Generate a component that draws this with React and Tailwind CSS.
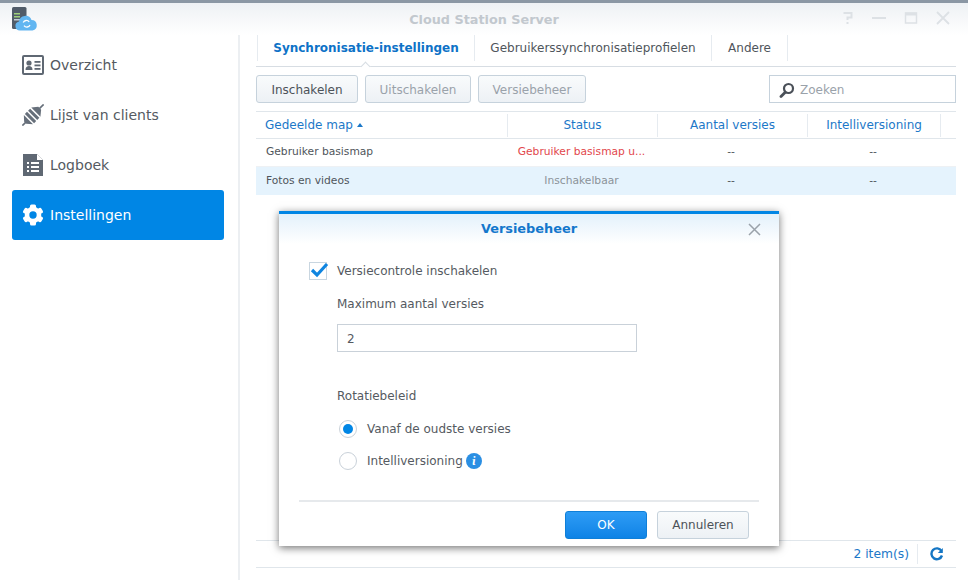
const font = { fontFamily: '"DejaVu Sans", sans-serif' };

function CloudLogo() {
  return (
    <svg width="26" height="26" viewBox="0 0 26 26">
      <rect x="0" y="0" width="14.500" height="22" rx="1.5" fill="#515c69" />
      <rect x="2" y="6" width="6" height="1.500" fill="#9fd07a" />
      <rect x="2" y="9" width="6" height="1.500" fill="#9fd07a" />
      <rect x="2" y="12" width="6" height="1.500" fill="#c3ccd6" />
      <path d="M8 23.500a4.500 4.500 0 0 1-1-8.900 6.500 6.500 0 0 1 12.500-1.600A5.300 5.300 0 0 1 20.500 23.500z" fill="#62b6f1" />
      <path d="M11.200 15.500a3.500 3.500 0 0 1 6-.6M18 18a3.500 3.500 0 0 1-6 .6" fill="none" stroke="#fff" strokeWidth="1.300" />
    </svg>
  );
}

function OverviewIcon() {
  return (
    <svg width="22" height="20" viewBox="0 0 22 20">
      <rect x="1" y="1" width="20" height="18" rx="1" fill="none" stroke="#5f6873" strokeWidth="2" />
      <circle cx="7" cy="8" r="2.6" fill="#5f6873" />
      <path d="M3.5 15c0-3 1.5-4 3.5-4s3.500 1 3.500 4z" fill="#5f6873" />
      <rect x="12.500" y="6" width="6" height="1.800" fill="#5f6873" />
      <rect x="12.500" y="9.500" width="6" height="1.800" fill="#5f6873" />
      <rect x="12.500" y="13" width="6" height="1.800" fill="#5f6873" />
    </svg>
  );
}

function PlugIcon() {
  return (
    <svg width="22" height="22" viewBox="0 0 22 22">
      <g transform="translate(11 11) rotate(-45)" fill="#666f7a">
        <rect x="-15" y="-0.800" width="5" height="1.600" />
        <path d="M-11 -1.500L-6.500 -6.500V6.500L-11 1.500z" />
        <rect x="-5" y="-6.500" width="3" height="13" />
        <rect x="-0.500" y="-6.500" width="3" height="13" />
        <path d="M4 -6.500V6.500L9.500 2V-2z" />
        <rect x="9" y="-0.800" width="6" height="1.600" />
      </g>
    </svg>
  );
}

function LogIcon() {
  return (
    <svg width="20" height="22" viewBox="0 0 20 22">
      <path d="M0 0h14l6 6v16H0z" fill="#5f6873" />
      <path d="M14 0v6h6z" fill="#fff" />
      <rect x="4" y="8" width="2" height="2" fill="#fff" />
      <rect x="8" y="8" width="8" height="2" fill="#fff" />
      <rect x="4" y="12" width="2" height="2" fill="#fff" />
      <rect x="8" y="12" width="8" height="2" fill="#fff" />
      <rect x="4" y="16" width="2" height="2" fill="#fff" />
      <rect x="8" y="16" width="8" height="2" fill="#fff" />
    </svg>
  );
}

function GearIcon() {
  return (
    <svg width="22" height="22" viewBox="0 0 22 22">
      <circle cx="11" cy="11" r="6" fill="none" stroke="#fff" strokeWidth="4.600" />
      {[0, 60, 120, 180, 240, 300].map((a) => (
        <rect key={a} x="8" y="0.500" width="6" height="5" rx="1.500" fill="#fff" transform={`rotate(${a} 11 11)`} />
      ))}
    </svg>
  );
}

function NavItem({ icon, label, active }) {
  return (
    <div className={`flex h-[50px] items-center rounded-[3px] ${active ? "bg-[#0086e5] text-white" : "text-[#555a61]"}`}>
      <div className="flex w-[38px] shrink-0 justify-center pl-[3px]">{icon}</div>
      <span className="text-[14px]">{label}</span>
    </div>
  );
}

function ToolButton({ label, disabled, className }) {
  return (
    <button
      type="button"
      className={`h-[28px] rounded-[3px] border border-[#c6d2dc] bg-gradient-to-b from-[#f9fbfc] to-[#edf1f5] pt-[1px] text-[12px] ${disabled ? "text-[#9aa2aa]" : "text-[#4c5258]"} ${className}`}
    >
      {label}
    </button>
  );
}

function HeadCell({ className, children }) {
  return <div className={`flex h-[23px] items-center justify-center border-r border-[#e6ebf0] text-[12px] text-[#1c78c8] ${className}`}>{children}</div>;
}

function Row({ name, status, statusClass, selected }) {
  return (
    <div className={`flex h-[28px] items-center text-[10.700px] text-[#4f555b] ${selected ? "bg-[#e5f3fd]" : "border-b border-[#eef1f4] bg-white"}`}>
      <div className="w-[251px] pl-[10px]">{name}</div>
      <div className={`w-[149px] text-center ${statusClass}`}>{status}</div>
      <div className="w-[150px] text-center">--</div>
      <div className="w-[134px] text-center">--</div>
    </div>
  );
}

function Radio({ checked, label, children }) {
  return (
    <div className="flex h-[32px] items-center">
      <span className="ml-[2px] flex h-[18px] w-[18px] items-center justify-center rounded-full border border-[#c9d1d9] bg-white">
        {checked && <span className="h-[10px] w-[10px] rounded-full bg-[#0086e5]" />}
      </span>
      <span className="ml-[10px] text-[12px] text-[#555a61]">{label}</span>
      {children}
    </div>
  );
}

export default function App() {
  return (
    <div style={font} className="relative flex h-[580px] w-[968px] flex-col overflow-hidden bg-white">
      <div className="h-[3px] bg-[#8b97a4]" />
      <div className="relative flex h-[32px] items-center justify-center bg-gradient-to-b from-[#eef1f4] to-white">
        <div className="absolute left-[12px] top-[4px]"><CloudLogo /></div>
        <span className="pt-[1px] text-[12.800px] font-bold text-[#c2c8ce]">Cloud Station Server</span>
        <div className="absolute right-[18px] top-[8px] flex items-center gap-[18px]">
          <svg className="mr-[-1px]" width="14" height="14" viewBox="0 0 14 14" fill="none" stroke="#dde1e5" strokeWidth="2">
            <path d="M2.500 2h8v4.500h-4V9" />
            <rect x="5.500" y="11" width="2" height="2" fill="#dde1e5" stroke="none" />
          </svg>
          <svg width="14" height="14" viewBox="0 0 14 14"><rect x="0" y="6" width="14" height="2" fill="#dde1e5" /></svg>
          <svg width="14" height="14" viewBox="0 0 14 14" fill="none" stroke="#dde1e5" strokeWidth="1.500">
            <rect x="1.500" y="2" width="11" height="10" />
            <rect x="1" y="1.500" width="12" height="3" fill="#dde1e5" stroke="none" />
          </svg>
          <svg width="14" height="14" viewBox="0 0 14 14" stroke="#dde1e5" strokeWidth="1.800"><path d="M1 1l12 12M13 1L1 13" /></svg>
        </div>
      </div>

      <div className="flex min-h-0 flex-1">
        <div className="w-[240px] shrink-0 border-r-2 border-[#eceff2] pl-[12px] pr-[14px] pt-[5px]">
          <NavItem icon={<OverviewIcon />} label="Overzicht" />
          <NavItem icon={<PlugIcon />} label="Lijst van clients" />
          <NavItem icon={<LogIcon />} label="Logboek" />
          <NavItem icon={<GearIcon />} label="Instellingen" active />
        </div>

        <div className="flex min-w-0 flex-1 flex-col pb-[12px] pl-[16px] pr-[12px]">
          <div className="relative flex h-[32px] shrink-0 items-stretch border-b border-[#d7dde3] pb-[5px] text-[12px] text-[#4f555b]">
            <div className="ml-[1px] flex w-[218px] items-center justify-center border-x border-[#e6ebf0] font-bold text-[#0d72c7]">
              Synchronisatie-instellingen
            </div>
            <div className="flex w-[237px] items-center justify-center border-r border-[#e6ebf0]">Gebruikerssynchronisatieprofielen</div>
            <div className="flex w-[76px] items-center justify-center border-r border-[#e6ebf0]">Andere</div>
            <span className="absolute bottom-[-4px] left-[106px] h-[7px] w-[7px] rotate-45 border-l border-t border-[#d7dde3] bg-white" />
          </div>

          <div className="mt-[8px] flex h-[28px] shrink-0 items-center gap-[7px]">
            <ToolButton className="w-[102px]" label="Inschakelen" />
            <ToolButton className="w-[106px]" label="Uitschakelen" disabled />
            <ToolButton className="w-[108px]" label="Versiebeheer" disabled />
            <div className="ml-auto flex h-[28px] w-[187px] items-center gap-[5px] border border-[#c6d2dc] pl-[9px] pt-[1px] text-[12px] text-[#9aa2aa]">
              <svg width="16" height="16" viewBox="0 0 16 16" fill="none" stroke="#4a5058">
                <circle cx="9.500" cy="6.500" r="4.500" strokeWidth="2.200" />
                <path d="M6 10.500L2 14.500" strokeWidth="2.800" strokeLinecap="round" />
              </svg>
              Zoeken
            </div>
          </div>

          <div className="mt-[8px] flex h-[28px] shrink-0 items-center border-y border-[#e0e6eb]">
            <HeadCell className="w-[252px] !justify-start pl-[9px]">
              Gedeelde map
              <span className="ml-[4px] mb-[1px] h-0 w-0 border-x-[3.500px] border-b-[4px] border-x-transparent border-b-[#1c78c8]" />
            </HeadCell>
            <HeadCell className="w-[150px]">Status</HeadCell>
            <HeadCell className="w-[150px]">Aantal versies</HeadCell>
            <HeadCell className="w-[133px]">Intelliversioning</HeadCell>
          </div>
          <Row name="Gebruiker basismap" status="Gebruiker basismap u..." statusClass="text-[#e2474c]" />
          <Row name="Fotos en videos" status="Inschakelbaar" statusClass="text-[#8b9299]" selected />

          <div className="flex-1" />

          <div className="flex h-[28px] shrink-0 items-center justify-end border-y border-[#e0e6eb] pr-[12px] text-[12.300px] text-[#1c78c8]">
            <span>2 item(s)</span>
            <span className="ml-[8px] h-[20px] border-l border-[#e6ebf0]" />
            <svg className="ml-[12px]" width="14" height="14" viewBox="0 0 14 14" fill="none" stroke="#1576c4" strokeWidth="2.400">
              <path d="M11.500 4A5.400 5.400 0 1 0 12 8.500" />
              <path d="M12.800 1v5h-5z" fill="#1576c4" stroke="none" />
            </svg>
          </div>
        </div>
      </div>

      <div className="absolute left-[279px] top-[211px] flex h-[335px] w-[500px] flex-col border-t-[3px] border-[#0086e5] bg-white shadow-[0_2px_8px_rgba(0,0,0,0.55)]">
        <div className="relative flex h-[30px] shrink-0 items-center justify-center bg-gradient-to-b from-[#e3f1fb] to-white text-[12.900px] font-bold text-[#1477cc]">
          Versiebeheer
          <svg className="absolute right-[18px] top-[9px]" width="13" height="13" viewBox="0 0 13 13" stroke="#9aa2aa" strokeWidth="1.500"><path d="M1 1l11 11M12 1L1 12" /></svg>
        </div>

        <div className="flex min-h-0 flex-1 flex-col pl-[30px] pt-[17px]">
          <div className="flex h-[20px] items-center">
            <span className="relative h-[18px] w-[18px] border border-[#c9d6e0] bg-white">
              <svg className="absolute left-0 top-[-2px]" width="20" height="18" viewBox="0 0 20 18" fill="none" stroke="#0f85e0" strokeWidth="3.200">
                <path d="M2 9l5 5L17 3" />
              </svg>
            </span>
            <span className="ml-[10px] text-[12px] text-[#555a61]">Versiecontrole inschakelen</span>
          </div>
          <div className="ml-[28px] mt-[13px] text-[12px] leading-[20px] text-[#555a61]">Maximum aantal versies</div>
          <div className="ml-[28px] mt-[10px] flex h-[28px] w-[300px] items-center border border-[#c9d1d9] pl-[9px] pt-[1px] text-[12px] text-[#555a61]">2</div>
          <div className="ml-[28px] mt-[34px] text-[12px] leading-[20px] text-[#555a61]">Rotatiebeleid</div>
          <div className="ml-[28px] mt-[7px]">
            <Radio checked label="Vanaf de oudste versies" />
            <Radio label="Intelliversioning">
              <span className="ml-[3px] flex h-[16px] w-[16px] items-center justify-center rounded-full bg-[#2b8fe3] font-serif text-[12px] font-bold italic text-white">i</span>
            </Radio>
          </div>
        </div>

        <div className="ml-[20px] mr-[20px] flex h-[46px] shrink-0 items-start justify-end gap-[10px] border-t-2 border-[#e6e9ec] pr-[10px] pt-[9px]">
          <button type="button" className="h-[28px] w-[82px] rounded-[3px] border border-[#0f7fd8] bg-gradient-to-b from-[#2d9cf5] to-[#0d83e6] text-[12px] text-white">OK</button>
          <button type="button" className="h-[28px] w-[92px] rounded-[3px] border border-[#c6d2dc] bg-gradient-to-b from-[#f9fbfc] to-[#edf1f5] text-[12px] text-[#4c5258]">Annuleren</button>
        </div>
      </div>
    </div>
  );
}
